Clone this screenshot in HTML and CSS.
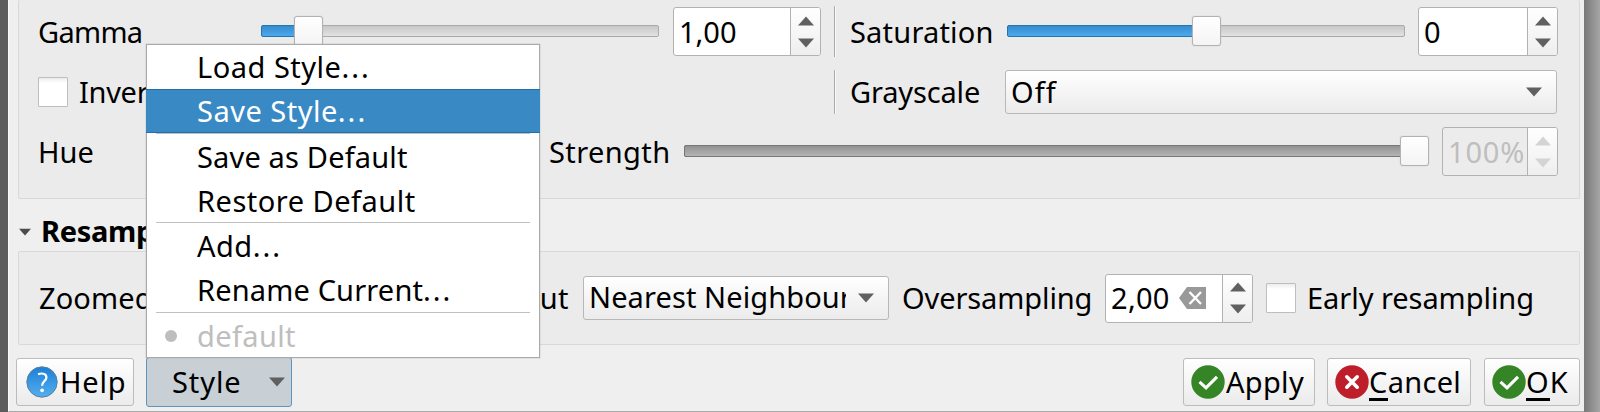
FILE: index.html
```html
<!DOCTYPE html>
<html lang="en">
<head>
<meta charset="utf-8">
<title>Layer Properties</title>
<link rel="stylesheet" href="styles.css">
</head>
<body>
<svg class="defs" width="0" height="0" aria-hidden="true">
  <defs>
    <linearGradient id="blue" x1="0" y1="0" x2="0" y2="1"><stop offset="0" stop-color="#1c7fd6"/><stop offset="1" stop-color="#55aeee"/></linearGradient>
    <symbol id="down" viewBox="0 0 16 10"><path d="M0 0.5H16L8 9.5Z" fill="currentColor"/></symbol>
    <symbol id="up" viewBox="0 0 16 10"><path d="M0 9.5H16L8 0.5Z" fill="currentColor"/></symbol>
    <symbol id="ok" viewBox="0 0 34 34"><circle cx="17" cy="17" r="16.7" fill="#358425"/><path d="M8.5 16.8L15 22.8L26 11.8" fill="none" stroke="#fff" stroke-width="3.1"/></symbol>
    <symbol id="no" viewBox="0 0 34 34"><circle cx="17" cy="17" r="16.7" fill="#be1e2a"/><path d="M11.8 11.8L22.2 22.2M22.2 11.8L11.8 22.2" fill="none" stroke="#fff" stroke-width="3.6" stroke-linecap="round"/></symbol>
  </defs>
</svg>
<div class="dialog">
  <section class="group group-color">
    <div class="row row-gamma">
      <span class="label label-gamma">Gamma</span>
      <div class="slider slider-gamma"><i class="fill"></i><b class="handle"></b></div>
      <div class="spin spin-gamma"><span class="value">1,00</span><span class="steps"><svg><use href="#up"/></svg><svg><use href="#down"/></svg></span></div>
      <i class="vline"></i>
      <span class="label label-saturation">Saturation</span>
      <div class="slider slider-saturation"><i class="fill"></i><b class="handle"></b></div>
      <div class="spin spin-saturation"><span class="value">0</span><span class="steps"><svg><use href="#up"/></svg><svg><use href="#down"/></svg></span></div>
    </div>
    <div class="row row-invert">
      <i class="check"></i>
      <span class="label label-invert">Invert colors</span>
      <i class="vline"></i>
      <span class="label label-grayscale">Grayscale</span>
      <div class="combo combo-grayscale"><span class="combo-text">Off</span><svg><use href="#down"/></svg></div>
    </div>
    <div class="row row-hue">
      <span class="label label-hue">Hue</span>
      <span class="label label-strength">Strength</span>
      <div class="slider slider-strength"><i class="fill"></i><b class="handle"></b></div>
      <div class="spin spin-strength"><span class="value">100%</span><span class="steps"><svg><use href="#up"/></svg><svg><use href="#down"/></svg></span></div>
    </div>
  </section>
  <h2 class="heading"><svg><use href="#down"/></svg><span>Resampling</span></h2>
  <section class="group group-resampling">
    <span class="label label-zoomed">Zoomed in</span>
    <span class="label label-out">out</span>
    <div class="combo combo-resampling"><span class="combo-text">Nearest Neighbour</span><svg><use href="#down"/></svg></div>
    <span class="label label-oversampling">Oversampling</span>
    <div class="spin spin-oversampling"><span class="value">2,00</span><svg class="clear" viewBox="0 0 27 22"><path d="M0 11L8 0H27V22H8Z" fill="#999"/><path d="M10.5 5L22 17M22 5L10.5 17" stroke="#fff" stroke-width="2.4" fill="none"/></svg><span class="steps"><svg><use href="#up"/></svg><svg><use href="#down"/></svg></span></div>
    <i class="check"></i>
    <span class="label label-early">Early resampling</span>
  </section>
  <footer class="buttons">
    <div class="button button-help"><svg class="help" viewBox="0 0 32 32"><circle cx="16" cy="16" r="15.2" fill="url(#blue)" stroke="#5b7f9c" stroke-width="1"/><path d="M12 8.3C17 6.4 20.6 8.2 20.4 11.6C20.2 15 16.1 15.2 16.1 19.8" fill="none" stroke="#fff" stroke-width="2.2"/><circle cx="16.1" cy="24.3" r="1.9" fill="#fff"/></svg><span>Help</span></div>
    <div class="button button-style"><span>Style</span><svg><use href="#down"/></svg></div>
    <div class="button button-apply"><svg class="icon"><use href="#ok"/></svg><span>Apply</span></div>
    <div class="button button-cancel"><svg class="icon"><use href="#no"/></svg><span><u>C</u>ancel</span></div>
    <div class="button button-ok"><svg class="icon"><use href="#ok"/></svg><span><u>O</u>K</span></div>
  </footer>
</div>
<div class="menu">
  <div class="item"><span class="t-load">Load Style<span class="dots">...</span></span></div>
  <div class="item selected"><span class="t-save">Save Style<span class="dots">...</span></span></div>
  <hr>
  <div class="item"><span class="t-saveas">Save as Default</span></div>
  <div class="item"><span class="t-restore">Restore Default</span></div>
  <hr>
  <div class="item"><span class="t-add">Add<span class="dots">...</span></span></div>
  <div class="item"><span class="t-rename">Rename Current<span class="dots">...</span></span></div>
  <hr>
  <div class="item disabled"><i class="bullet"></i><span class="t-default">default</span></div>
</div>
</body>
</html>
```
FILE: styles.css
```css
* { box-sizing: border-box; }
html, body { height: 412px; overflow: hidden; }
body {
  margin: 0;
  padding: 0 16px 0 8px;
  background: linear-gradient(90deg, #5c5c5c 0 1584px, #787878 1584px, #a6a6a6 1600px);
  font: 29px/44px "Noto Sans", "Open Sans", sans-serif;
  color: #000;
}
.defs { height: 0; }
svg, i, b { display: block; flex: none; }
span { white-space: nowrap; }

.dialog {
  height: 412px;
  padding: 0 4px 0 9px;
  background: #efefef;
  border-bottom: 1px solid #aaa;
  border-left: 1px solid #f8f8f8;
}
.group { background: #ebebeb; border: 1px solid #d8d8d8; border-radius: 2px; }
.group-color { height: 199px; border-top: 0; padding: 7px 21px 0 19px; }
.group-resampling { height: 94px; display: flex; align-items: center; padding: 0 0 0 20px; }

.row { display: flex; align-items: center; height: 49px; }
.row-invert { height: 44px; margin-top: 14px; }
.row-hue { margin-top: 13px; }
.label { flex: none; }
.vline { width: 2px; height: 51px; border-left: 1px solid #aaa; border-right: 1px solid #f8f8f8; }
.row-invert .vline { height: 44px; }

.label-gamma { width: 223px; letter-spacing: -.7px; }
.label-saturation { width: 158px; margin-left: 14px; letter-spacing: .2px; }
.label-invert { width: 755px; margin-left: 11px; letter-spacing: -.3px; }
.label-grayscale { width: 155px; margin-left: 14px; letter-spacing: -.15px; }
.label-hue { width: 511px; letter-spacing: .1px; }
.label-strength { width: 135px; letter-spacing: .4px; }
.label-zoomed { width: 483px; letter-spacing: .1px; }
.label-out { width: 61px; letter-spacing: .3px; }
.label-oversampling { margin-left: 13px; width: 203px; letter-spacing: -.1px; }
.label-early { margin-left: 11px; letter-spacing: -.05px; }

.slider {
  flex: none;
  display: flex;
  align-items: center;
  height: 12px;
  margin-bottom: 1px;
  border: 1px solid #aaa;
  border-radius: 2px;
  background: linear-gradient(#c8c8c8, #e2e2e2);
}
.fill {
  height: 12px;
  margin: -1px 0 -1px -1px;
  border: 1px solid #2476b1;
  border-radius: 2px 0 0 2px;
  background: linear-gradient(#388ccb, #4aa8f0);
}
.handle {
  width: 29px;
  height: 30px;
  margin: -1px 0 0 -1px;
  border: 1px solid #b2b2b2;
  border-radius: 3px;
  background: linear-gradient(#fff, #f4f4f4);
  box-shadow: 0 0 1px #aaa;
}
.slider-gamma { width: 398px; }
.slider-gamma .fill { width: 34px; }
.slider-saturation { width: 398px; margin-left: -1px; }
.slider-saturation .fill { width: 186px; }
.slider-strength { width: 741px; border-color: #777; background: #aaa; }
.slider-strength .fill { width: 717px; border-color: #777; background: linear-gradient(#929292, #b4b4b4); }

.spin {
  flex: none;
  display: flex;
  align-items: center;
  height: 49px;
  border: 1px solid #b2b2b2;
  border-radius: 3px;
  background: #fff;
  overflow: hidden;
}
.value { flex: 1; padding-left: 5px; }
.steps {
  display: flex;
  flex-direction: column;
  justify-content: center;
  align-items: center;
  gap: 12px;
  width: 30px;
  height: 49px;
  border-left: 1px solid #b2b2b2;
  background: linear-gradient(#fff, #eee);
  color: #606060;
}
.steps svg, .combo svg, .button-style svg { width: 16px; height: 10px; color: #606060; }
.spin-gamma { width: 148px; margin: 0 13px 0 14px; }
.spin-saturation { width: 140px; margin-left: 13px; }
.spin-strength { width: 116px; margin-left: 17px; background: #ececec; color: #bebebe; letter-spacing: .8px; }
.spin-strength .steps svg { color: #d4d4d4; }
.spin-oversampling { width: 148px; margin-right: 13px; }
.spin-oversampling .value { letter-spacing: .3px; }
.clear { width: 27px; height: 22px; margin-right: 16px; margin-top: -1px; }

.combo {
  flex: none;
  display: flex;
  align-items: center;
  justify-content: space-between;
  height: 44px;
  border: 1px solid #b8b8b8;
  border-radius: 3px;
  background: linear-gradient(#fff, #ebebeb);
}
.combo svg { margin-right: 14px; }
.combo-text { overflow: hidden; padding-left: 5px; }
.combo-grayscale { width: 552px; }
.combo-grayscale .combo-text { letter-spacing: 1px; }
.combo-resampling { width: 306px; }
.combo-resampling .combo-text { width: 262px; margin-top: -2px; letter-spacing: .1px; }

.check {
  width: 30px;
  height: 30px;
  border: 1px solid #bebebe;
  border-radius: 1px;
  background: linear-gradient(#ececec, #fff 5px);
}

.heading { display: flex; align-items: center; height: 52px; margin: 0; font-size: 29px; line-height: 44px; padding-top: 11px; }
.heading svg { width: 12px; height: 8px; margin: 3px 10px 0 1px; color: #4c4c4c; }
.heading span { letter-spacing: -.3px; }

.buttons { display: flex; align-items: center; height: 61px; margin-left: -2px; padding-top: 13px; }
.button {
  flex: none;
  display: flex;
  align-items: center;
  height: 48px;
  border: 1px solid #bcbcbc;
  border-radius: 3px;
  background: linear-gradient(#fff, #ebebeb);
}
.icon { width: 34px; height: 34px; margin-left: 7px; }
.button u { display: inline-block; height: 41px; border-bottom: 3px solid #000; text-decoration: none; vertical-align: top; }
.button-help { width: 118px; letter-spacing: .8px; }
.help { width: 32px; height: 32px; margin: 0 2px 0 9px; }
.button-style { width: 146px; height: 50px; margin-left: 12px; padding: 0 6px 0 25px; justify-content: space-between; border-color: #5f95bd; background: #c8cfd5; letter-spacing: .9px; }
.button-apply { width: 132px; margin-left: auto; letter-spacing: .3px; }
.button-apply > span { margin-left: 1px; }
.button-cancel { width: 144px; margin: 0 13px 0 12px; letter-spacing: .3px; }
.button-ok { width: 96px; letter-spacing: 1px; }

/* Pop-up menu lying over the dialog */
.menu {
  position: absolute;
  left: 146px;
  top: 44px;
  width: 394px;
  height: 314px;
  border: 1px solid #aaa;
  background: #fff;
  box-shadow: 0 0 1px #999;
}
.item { display: flex; align-items: center; height: 43.8px; padding-left: 50px; }
.item.selected { height: 44px; margin: 0 -1px; padding-left: 51px; background: #398ac4; color: #fff; border: 1px solid #1f70ab; border-width: 1px 0; }
.menu hr { height: 1px; margin: 0 9px 1px; border: 0; background: #c0c0c0; }
.disabled { color: #bebebe; }
.bullet { width: 12px; height: 12px; margin: 0 20px 0 -32px; border-radius: 50%; background: #bebebe; }
.t-load { letter-spacing: .5px; }
.t-save { letter-spacing: .5px; }
.t-saveas { letter-spacing: .16px; }
.t-restore { letter-spacing: .5px; }
.t-add { letter-spacing: .5px; }
.t-rename { letter-spacing: .15px; }
.t-default { letter-spacing: .36px; }
.dots { letter-spacing: 2px; }
```
